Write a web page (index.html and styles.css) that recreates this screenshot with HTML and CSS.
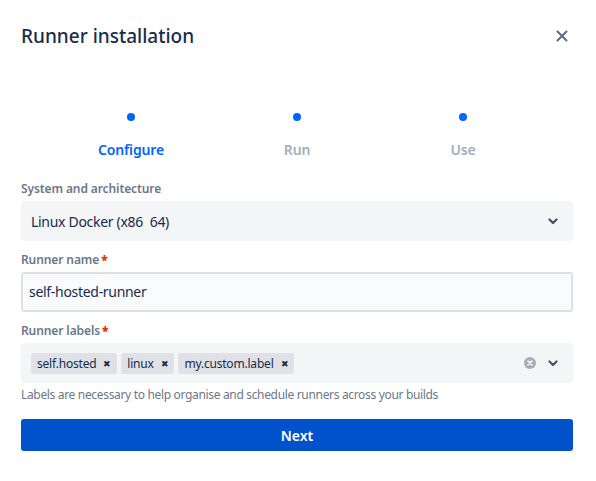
FILE: index.html
```html
<!DOCTYPE html>
<html lang="en">
<head>
    <meta charset="UTF-8">
    <title>Runner installation</title>
    <link rel="stylesheet" href="styles.css">
</head>
<body>
<div class="modal">

    <!--header-->
    <div class="modal-head">
        <h1 class="modal-title">Runner installation</h1>
        <span class="close">
            <svg width="12" height="12" viewBox="0 0 12 12"><path d="M1.5 1.5l9 9M10.5 1.5l-9 9" stroke="#5E6C84" stroke-width="2" stroke-linecap="round"/></svg>
        </span>
    </div>

    <!--steps-->
    <ul class="steps">
        <li class="step on"><i class="dot"></i><span>Configure</span></li>
        <li class="step"><i class="dot"></i><span>Run</span></li>
        <li class="step"><i class="dot"></i><span>Use</span></li>
    </ul>

    <!--form-->
    <div class="field">
        <label class="label">System and architecture</label>
        <div class="select">
            <span class="value">Linux Docker (x86&nbsp;&nbsp;64)</span>
            <span class="chevron">
                <svg width="10" height="8" viewBox="0 0 10 8"><path d="M1.5 2.5L5 6l3.5-3.5" fill="none" stroke="#42526E" stroke-width="2.2" stroke-linecap="round" stroke-linejoin="round"/></svg>
            </span>
        </div>
    </div>

    <div class="field">
        <label class="label">Runner name<b>*</b></label>
        <div class="input">self-hosted-runner</div>
    </div>

    <div class="field">
        <label class="label">Runner labels<b>*</b></label>
        <div class="select multi">
            <div class="tags">
                <span class="tag">self.hosted<i>&#10006;</i></span>
                <span class="tag">linux<i>&#10006;</i></span>
                <span class="tag">my.custom.label<i>&#10006;</i></span>
            </div>
            <span class="clear">
                <svg width="12" height="12" viewBox="0 0 12 12"><circle cx="6" cy="6" r="6" fill="#A5ADBA"/><path d="M4 4l4 4M8 4l-4 4" stroke="#fff" stroke-width="1.6" stroke-linecap="round"/></svg>
            </span>
            <span class="chevron">
                <svg width="10" height="8" viewBox="0 0 10 8"><path d="M1.5 2.5L5 6l3.5-3.5" fill="none" stroke="#42526E" stroke-width="2.2" stroke-linecap="round" stroke-linejoin="round"/></svg>
            </span>
        </div>
        <p class="help">Labels are necessary to help organise and schedule runners across your builds</p>
    </div>

    <button class="btn">Next</button>
</div>
</body>
</html>
```

FILE: styles.css
```css
*{
    margin: 0;
    padding: 0;
    box-sizing: border-box;
}
li{
    list-style: none;
}
body{
    background: #fff;
    font-family: "Noto Sans", "Open Sans", sans-serif;
    color: #172B4D;
}
.modal{
    width: 596px;
    padding: 0 23px 0 21px;
}
.modal-head{
    display: flex;
    justify-content: space-between;
    align-items: center;
    padding-top: 24px;
}
.modal-title{
    font-size: 19px;
    line-height: 24px;
    font-weight: 500;
    color: #172B4D;
}
.close{
    display: flex;
    margin-right: 5px;
}
.steps{
    display: flex;
    margin-top: 65px;
    padding: 0 27px;
}
.step{
    flex: 1;
    display: flex;
    flex-direction: column;
    align-items: center;
    font-size: 14px;
    line-height: 20px;
    font-weight: 600;
    letter-spacing: -0.15px;
    color: #A5ADBA;
}
.step.on{
    color: #0065FF;
}
.step .dot{
    width: 8px;
    height: 8px;
    border-radius: 50%;
    background: #0065FF;
    margin-bottom: 19px;
}
.field{
    margin-top: 21px;
}
.field + .field{
    margin-top: 11px;
}
.label{
    display: block;
    font-size: 12px;
    line-height: 16px;
    font-weight: 600;
    letter-spacing: -0.1px;
    color: #6B778C;
    margin-bottom: 4px;
}
.label b{
    color: #DE350B;
    margin-left: 2px;
}
.select{
    display: flex;
    align-items: center;
    height: 40px;
    background: #F4F5F7;
    border-radius: 3px;
    padding: 0 15px 0 10px;
    font-size: 14px;
    letter-spacing: -0.3px;
}
.select .value{
    flex: 1;
}
.chevron{
    display: flex;
}
.tags{
    flex: 1;
    display: flex;
    gap: 4px;
}
.tag{
    display: flex;
    align-items: center;
    height: 21px;
    padding: 0 6px;
    background: #DFE1E6;
    border-radius: 3px;
    font-size: 12px;
    letter-spacing: -0.2px;
    color: #172B4D;
}
.tag i{
    font-style: normal;
    font-size: 9px;
    margin-left: 7px;
    color: #172B4D;
}
.clear{
    display: flex;
    margin-right: 12px;
}
.input{
    height: 40px;
    border: 2px solid #DFE1E6;
    border-radius: 3px;
    background: #FAFBFC;
    padding: 0 6px;
    font-size: 14px;
    line-height: 36px;
    letter-spacing: -0.3px;
}
.help{
    margin-top: 4px;
    font-size: 12px;
    line-height: 16px;
    letter-spacing: -0.33px;
    color: #6B778C;
}
.btn{
    display: block;
    width: 100%;
    height: 32px;
    margin-top: 16px;
    border: 0;
    border-radius: 3px;
    background: #0052CC;
    color: #fff;
    font-family: inherit;
    font-size: 14px;
    font-weight: 600;
}
```
